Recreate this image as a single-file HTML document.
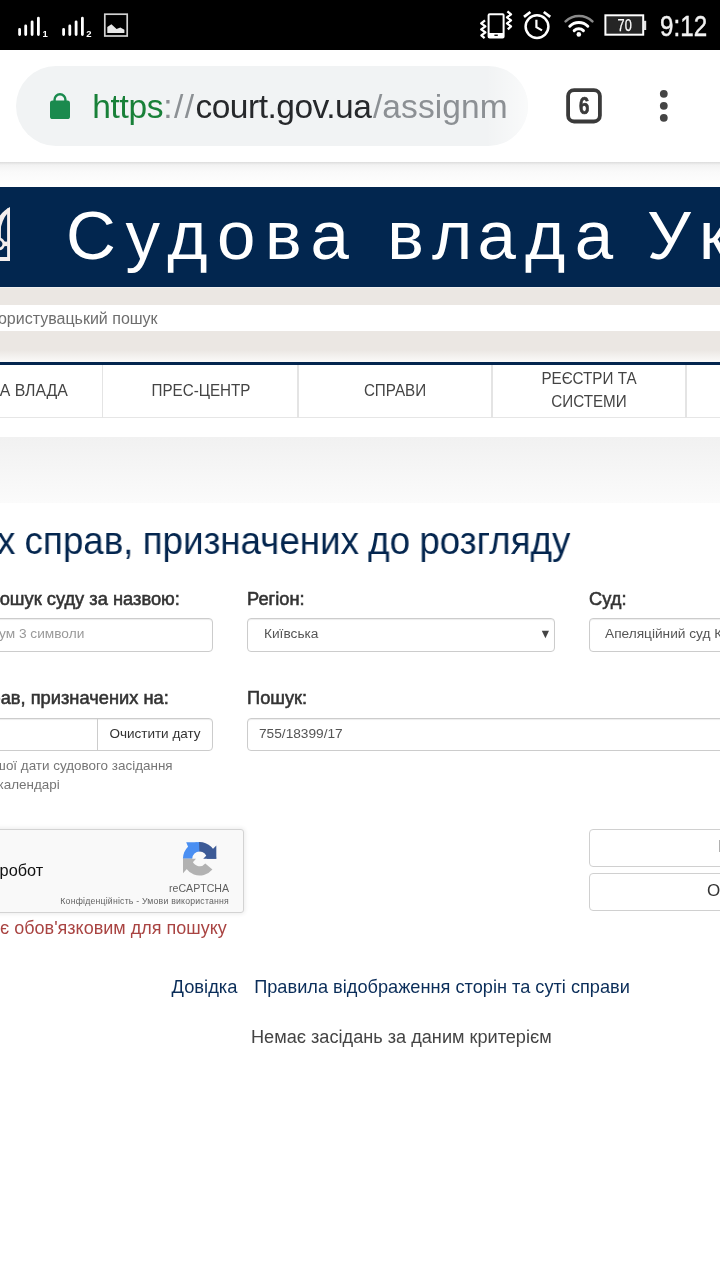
<!DOCTYPE html>
<html lang="uk">
<head>
<meta charset="utf-8">
<title>court.gov.ua</title>
<style>
html,body{margin:0;padding:0;}
body{width:720px;height:1280px;position:relative;overflow:hidden;background:#fff;font-family:"Liberation Sans",sans-serif;color:#333;}
#root{position:absolute;left:0;top:0;width:720px;height:1280px;overflow:hidden;will-change:transform;}
.abs{position:absolute;white-space:nowrap;}
/* status bar */
#status{left:0;top:0;width:720px;height:50px;background:#000;}
#clock{left:660px;top:10.4px;font-size:30px;line-height:32px;color:#f2f2f2;-webkit-text-stroke:0.45px #f2f2f2;transform-origin:0 0;transform:scaleX(0.807);}
/* chrome toolbar */
#toolbar{left:0;top:50px;width:720px;height:112px;background:#fff;}
#pill{left:16px;top:66px;width:512px;height:80px;border-radius:40px;background:#f1f3f4;overflow:hidden;}
#url{left:92.3px;top:87px;font-size:33.5px;line-height:40px;color:#26282b;letter-spacing:0.08px;}
#url .g{color:#188038;letter-spacing:-0.35px;}
#url .m{color:#8c9094;}
#tbshadow{left:0;top:162px;width:720px;height:26px;background:linear-gradient(#dcdcdc 0,#f2f2f2 3px,#fafafa 10px,#fff 26px);}
/* page */
#banner{left:0;top:187px;width:720px;height:100px;background:#02264f;}
#title{left:66px;top:196px;font-size:69px;line-height:80px;color:#fff;letter-spacing:9.6px;}
#beige{left:0;top:287px;width:720px;height:75px;background:#ebe7e3;}
#srow{left:0;top:305px;width:720px;height:26px;background:#fff;}
#stext{left:-11.4px;top:308px;font-size:16px;line-height:22px;color:#6e6e6e;}
#beigefade{left:0;top:350px;width:720px;height:12px;background:linear-gradient(#ebe7e3,#fbfaf9);}
#navline{left:0;top:361.6px;width:720px;height:3.2px;background:#03254e;}
#nav{left:0;top:365px;width:720px;height:54px;background:#fff;}
.cell{position:absolute;top:365px;height:53px;border-right:2px solid #e6e6e6;border-bottom:1px solid #e6e6e6;box-sizing:border-box;}
.vd{top:365px;width:1.8px;height:53px;background:#e4e4e4;}
.nt{font-size:16px;line-height:23px;color:#444;text-align:center;transform:scaleX(0.95);}
#grey{left:0;top:437px;width:720px;height:66px;background:linear-gradient(#f1f1f1,#fbfbfb);}
#h1{left:-2.6px;top:519.2px;font-size:38px;line-height:44px;color:#03254e;transform-origin:0 50%;transform:scaleX(0.9665);word-spacing:-1px;}
.lbl{font-size:18.3px;line-height:22px;color:#333;-webkit-text-stroke:0.55px #333;}
.inp{position:absolute;box-sizing:border-box;border:1px solid #ccc;border-radius:4px;background:#fff;box-shadow:inset 0 1px 1px rgba(0,0,0,.075);}
.it{font-size:13.7px;line-height:18px;color:#555;}
.ph{color:#999;}
.help{font-size:13.45px;line-height:19px;color:#757575;}
.link{font-size:18.2px;line-height:22px;color:#0a2d59;}
</style>
</head>
<body>
<div id="root">
<div id="status" class="abs"></div>
<svg class="abs" style="left:0;top:0" width="720" height="50" viewBox="0 0 720 50">
<g stroke="#fff" stroke-width="2.8" stroke-linecap="round" fill="none">
<path d="M19.6 29.5V34.5M25.7 26V34.5M32.1 21.8V34.5M38.4 18.2V34.5"/>
<path d="M63.6 29.5V34.5M69.8 26V34.5M76.1 21.8V34.5M82.4 18.2V34.5"/>
</g>
<text x="42.6" y="36.6" font-family="Liberation Sans" font-weight="bold" font-size="9.5" fill="#fff">1</text>
<text x="86.2" y="36.6" font-family="Liberation Sans" font-weight="bold" font-size="9.5" fill="#fff">2</text>
<rect x="104.8" y="14.2" width="22.4" height="21.8" fill="none" stroke="#d2d2d2" stroke-width="1.7"/>
<path d="M107.3 33V27L111.4 24.2L116.6 29L120.3 27.4L124.4 29.8V33Z" fill="#e8e8e8"/>
<!-- vibrate -->
<g fill="none" stroke="#fff" stroke-width="2" stroke-linejoin="round">
<rect x="488.6" y="14.2" width="15" height="23.2" rx="1"/>
<path d="M485 20.4L481.2 23.4L485.4 26.4L481.2 29.4L485.4 32.4L481.4 35.4L484.6 38.2" stroke-width="2.3"/>
<path d="M507.4 11.4L511 14.4L507 17.4L511 20.4L507 23.4L511 26.4L507.8 29.4" stroke-width="2.3"/>
</g>
<rect x="488.6" y="33" width="15" height="4.4" fill="#fff"/>
<rect x="494.4" y="34.6" width="3.4" height="1.3" fill="#000"/>
<!-- alarm -->
<g fill="none" stroke="#fff" stroke-width="2.5">
<circle cx="537" cy="26.6" r="11.4"/>
<path d="M524 16.8L530.4 12M543.8 12L550.2 16.8" stroke-width="2.8"/>
<path d="M536.4 19.8V27.2L542 30.4" stroke-width="2.2"/>
</g>
<!-- wifi -->
<g fill="none" stroke-width="3" stroke-linecap="round">
<path d="M565.6 21.4A19.2 19.2 0 0 1 592.4 21.4" stroke="#8a8a8a" stroke-width="2.6"/>
<path d="M569.8 26.2A12.6 12.6 0 0 1 587.8 26.2" stroke="#fff"/>
<path d="M574.2 30.6A6.6 6.6 0 0 1 583.4 30.6" stroke="#fff"/>
</g>
<circle cx="578.8" cy="34.4" r="2.3" fill="#fff"/>
<!-- battery -->
<rect x="605.4" y="15.3" width="37.8" height="19.4" fill="#252525" stroke="#fff" stroke-width="2"/>
<rect x="643.6" y="20.8" width="2.6" height="9.2" fill="#e4e4e4"/>
<text x="624.7" y="31.3" text-anchor="middle" font-family="Liberation Sans" font-size="16.6" fill="#fff" stroke="#fff" stroke-width="0.25" textLength="14.2" lengthAdjust="spacingAndGlyphs">70</text>
</svg>
<div id="clock" class="abs">9:12</div>

<div id="toolbar" class="abs"></div>
<div id="pill" class="abs"><div style="position:absolute;left:470px;top:0;width:42px;height:80px;background:linear-gradient(to right,rgba(255,255,255,0),rgba(255,255,255,.6));"></div></div>
<div id="url" class="abs"><span class="g">https</span><span class="m" style="letter-spacing:1.45px">://</span><span style="letter-spacing:-0.5px">court.gov.ua</span><span class="m" style="margin-left:1.6px">/assignm</span></div>
<svg class="abs" style="left:40px;top:85px" width="40" height="40" viewBox="40 85 40 40">
<rect x="50" y="100.6" width="20" height="18.4" rx="2.6" fill="#1a8a4e"/>
<path d="M54.6 102V99.6A5.4 5.4 0 0 1 65.4 99.6V102" fill="none" stroke="#1a8a4e" stroke-width="2.4"/>
</svg>
<svg class="abs" style="left:560px;top:80px" width="120" height="50" viewBox="560 80 120 50">
<rect x="568.1" y="90.1" width="31.8" height="31.4" rx="6" fill="none" stroke="#3a3a3a" stroke-width="3.8"/>
<text x="584.1" y="114.2" text-anchor="middle" font-family="Liberation Sans" font-weight="bold" font-size="23.5" fill="#3a3a3a" stroke="#3a3a3a" stroke-width="0.7" textLength="10.4" lengthAdjust="spacingAndGlyphs">6</text>
<circle cx="663.8" cy="93.8" r="3.9" fill="#454545"/>
<circle cx="663.8" cy="105.8" r="3.9" fill="#454545"/>
<circle cx="663.8" cy="117.8" r="3.9" fill="#454545"/>
</svg>
<div id="tbshadow" class="abs"></div>

<div id="banner" class="abs"></div>
<svg class="abs" style="left:0;top:200px" width="14" height="66" viewBox="0 200 14 66">
<g fill="#f4eeed">
<rect x="7.1" y="208.5" width="2.9" height="52.5"/>
<rect x="0" y="257" width="10" height="4"/>
<rect x="3.6" y="241.6" width="4" height="4.5"/>
<path d="M10 206.9V211C6 214 3 219 1.2 226L0 232V215.5C3 211.5 6.5 208.8 10 206.9Z"/>
<rect x="0" y="222" width="1" height="18" opacity="0.9"/>
</g>
<circle cx="-1.2" cy="244" r="5" fill="none" stroke="#f4eeed" stroke-width="2.6"/>
</svg>
<div id="title" class="abs">Судова в<span style="margin-left:-1.5px">л</span><span style="margin-left:-4.5px">а</span><span style="margin-left:-0.5px">д</span>а<span style="margin-left:-4.5px"> </span>У<span style="margin-left:-1.5px">к</span>раїни</div>
<div id="beige" class="abs"></div>
<div class="abs" style="left:0;top:287px;width:720px;height:1px;background:#f1f0f1;"></div>
<div id="srow" class="abs"></div>
<div id="stext" class="abs">Користувацький пошук</div>
<div id="beigefade" class="abs"></div>
<div id="navline" class="abs"></div>
<div id="nav" class="abs"></div>
<div class="abs" style="left:0;top:417px;width:720px;height:1.4px;background:#e6e6e6;"></div>
<div class="abs vd" style="left:101.6px;"></div>
<div class="abs vd" style="left:297.4px;"></div>
<div class="abs vd" style="left:491.2px;"></div>
<div class="abs vd" style="left:685.0px;"></div>
<div class="abs nt" style="right:652.6px;top:379.2px;transform-origin:100% 50%;transform:scaleX(0.99);">А ВЛАДА</div>
<div class="abs nt" style="left:103.5px;width:194px;top:379.2px;">ПРЕС-ЦЕНТР</div>
<div class="abs nt" style="left:298px;width:194px;top:379.2px;">СПРАВИ</div>
<div class="abs nt" style="left:492.4px;width:194px;top:366.9px;">РЕЄСТРИ ТА<br>СИСТЕМИ</div>
<div id="grey" class="abs"></div>

<div id="h1" class="abs">х справ, призначених до розгляду</div>

<div class="abs lbl" style="left:-0.3px;top:587.6px;">ошук суду за назвою:</div>
<div class="abs lbl" style="left:247px;top:587.6px;">Регіон:</div>
<div class="abs lbl" style="left:589px;top:587.6px;">Суд:</div>
<div class="inp" style="left:-60px;top:618px;width:273px;height:34px;"></div>
<div class="abs it ph" style="left:-1px;top:625px;">ум 3 символи</div>
<div class="inp" style="left:247px;top:618px;width:308px;height:34px;"></div>
<div class="abs it" style="left:264px;top:625px;">Київська</div>
<svg class="abs" style="left:540px;top:628px" width="12" height="12" viewBox="540 628 12 12"><path d="M541.8 630.8H549L545.4 638.3Z" fill="#444"/></svg>
<div class="inp" style="left:589px;top:618px;width:200px;height:34px;"></div>
<div class="abs it" style="left:605px;top:625px;">Апеляційний суд Київської</div>

<div class="abs lbl" style="left:-9.5px;top:686.6px;">рав, призначених на:</div>
<div class="abs lbl" style="left:247px;top:686.6px;">Пошук:</div>
<div class="inp" style="left:-60px;top:718px;width:273px;height:33px;"></div>
<div class="abs" style="left:97px;top:719px;width:1px;height:31px;background:#ccc;"></div>
<div class="abs" style="left:109.4px;top:723.5px;font-size:13.5px;line-height:20px;color:#333;">Очистити дату</div>
<div class="inp" style="left:247px;top:718px;width:540px;height:33px;"></div>
<div class="abs it" style="left:259px;top:725px;">755/18399/17</div>
<div class="abs help" style="left:-4.9px;top:755.5px;">шої дати судового засідання</div>
<div class="abs help" style="left:-2.4px;top:774.5px;">календарі</div>

<!-- recaptcha -->
<div class="abs" id="rc" style="left:-60px;top:829px;width:304px;height:84px;box-sizing:border-box;border:1px solid #d3d3d3;border-radius:3px;background:#f9f9f9;box-shadow:0 0 4px 1px rgba(0,0,0,.08);"></div>
<svg class="abs" style="left:178px;top:838px" width="44" height="42" viewBox="178 838 44 42">
<path d="M182.90 858.80A16.7 16.7 0 0 1 200.18 842.11L199.86 851.40A7.4 7.4 0 0 0 192.20 858.80Z" fill="#4a8ff2"/>
<path d="M186.2 842.3H197.5L190 851.5Z" fill="#4a8ff2"/>
<path d="M199.02 842.11A16.7 16.7 0 0 1 216.30 858.80L207.00 858.80A7.4 7.4 0 0 0 199.34 851.40Z" fill="#3c5a96"/>
<path d="M216.3 845.4V858.8H203.2Z" fill="#3c5a96"/>
<path d="M212.39 869.53A16.7 16.7 0 0 1 182.90 858.80L192.20 858.80A7.4 7.4 0 0 0 205.27 863.56Z" fill="#b2b2b2"/>
<path d="M183 858.8V873.2L196 858.8Z" fill="#b2b2b2"/>
</svg>
<div class="abs" style="left:-0.4px;top:860px;font-size:16.3px;line-height:20px;color:#111;">робот</div>
<div class="abs" style="left:169px;top:881px;font-size:10.6px;line-height:14px;color:#5f5f5f;">reCAPTCHA</div>
<div class="abs" style="left:60.3px;top:895px;font-size:8.7px;line-height:12px;color:#626262;letter-spacing:0.22px;">Конфіденційність - Умови використання</div>
<div class="abs" style="left:0.1px;top:916.5px;font-size:18px;line-height:22px;color:#a94442;">є обов'язковим для пошуку</div>

<div class="inp" style="left:589px;top:829px;width:200px;height:38px;box-shadow:none;border-color:#d0d0d0;"></div>
<div class="inp" style="left:589px;top:873px;width:200px;height:38px;box-shadow:none;border-color:#d0d0d0;"></div>
<div class="abs" style="left:707px;top:880px;font-size:17px;line-height:22px;color:#333;">Очистити</div>
<div class="abs" style="left:718.3px;top:836px;font-size:17px;line-height:22px;color:#333;">Пошук</div>

<div class="abs link" style="left:171.5px;top:976px;font-size:18.35px;">Довідка</div>
<div class="abs link" style="left:254.2px;top:976px;">Правила відображення сторін та суті справи</div>
<div class="abs" style="left:251px;top:1026px;font-size:18.15px;line-height:22px;color:#444;">Немає засідань за даним критерієм</div>
</div>
</body>
</html>
